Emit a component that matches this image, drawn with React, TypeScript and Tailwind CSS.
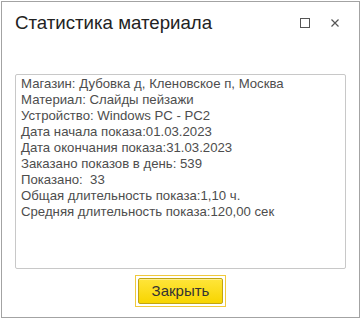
const lines = [
    "Магазин: Дубовка д, Кленовское п, Москва",
    "Материал: Слайды пейзажи",
    "Устройство: Windows PC - PC2",
    "Дата начала показа:01.03.2023",
    "Дата окончания показа:31.03.2023",
    "Заказано показов в день: 539",
    "Показано:  33",
    "Общая длительность показа:1,10 ч.",
    "Средняя длительность показа:120,00 сек",
];

function App() {
    return (
        <div className="w-[362px] h-[319px] bg-white pl-px pt-px font-['Liberation_Sans',Arial,sans-serif]">
            <div className="w-[359px] h-[317px] border border-[#a3a3a3] bg-white flex flex-col">
                <div className="flex items-center h-[42px] pl-[13px] pr-[20px]">
                    <h1 className="text-[18.67px] leading-none text-[#222] flex-1 whitespace-nowrap">Статистика материала</h1>
                    <span className="w-[10px] h-[10px] border border-[#555] mr-[21px]" />
                    <svg width="8" height="8" viewBox="0 0 8 8" className="text-[#555]">
                        <path d="M0.5 0.5L7.5 7.5M7.5 0.5L0.5 7.5" stroke="currentColor" strokeWidth="1.2" />
                    </svg>
                </div>
                <div className="mt-[30px] mx-[13px] h-[195px] border border-[#c8c8c8] rounded-[2px] px-[5px] pt-px">
                    {lines.map((line) => (
                        <div key={line} className="text-[13.2px] leading-[16px] text-[#4d4d4d] whitespace-pre">{line}</div>
                    ))}
                </div>
                <div className="flex justify-center mt-[6px]">
                    <div className="border border-[#f0c93c] p-[2px]">
                        <button className="w-[85px] h-[26px] rounded-[2px] border border-[#bfa415] bg-[linear-gradient(#ffe53a,#f7d500)] text-[15px] text-[#333] shadow-[inset_0_1px_0_rgba(255,255,255,0.4)]">
                            Закрыть
                        </button>
                    </div>
                </div>
            </div>
        </div>
    );
}

export default App;
